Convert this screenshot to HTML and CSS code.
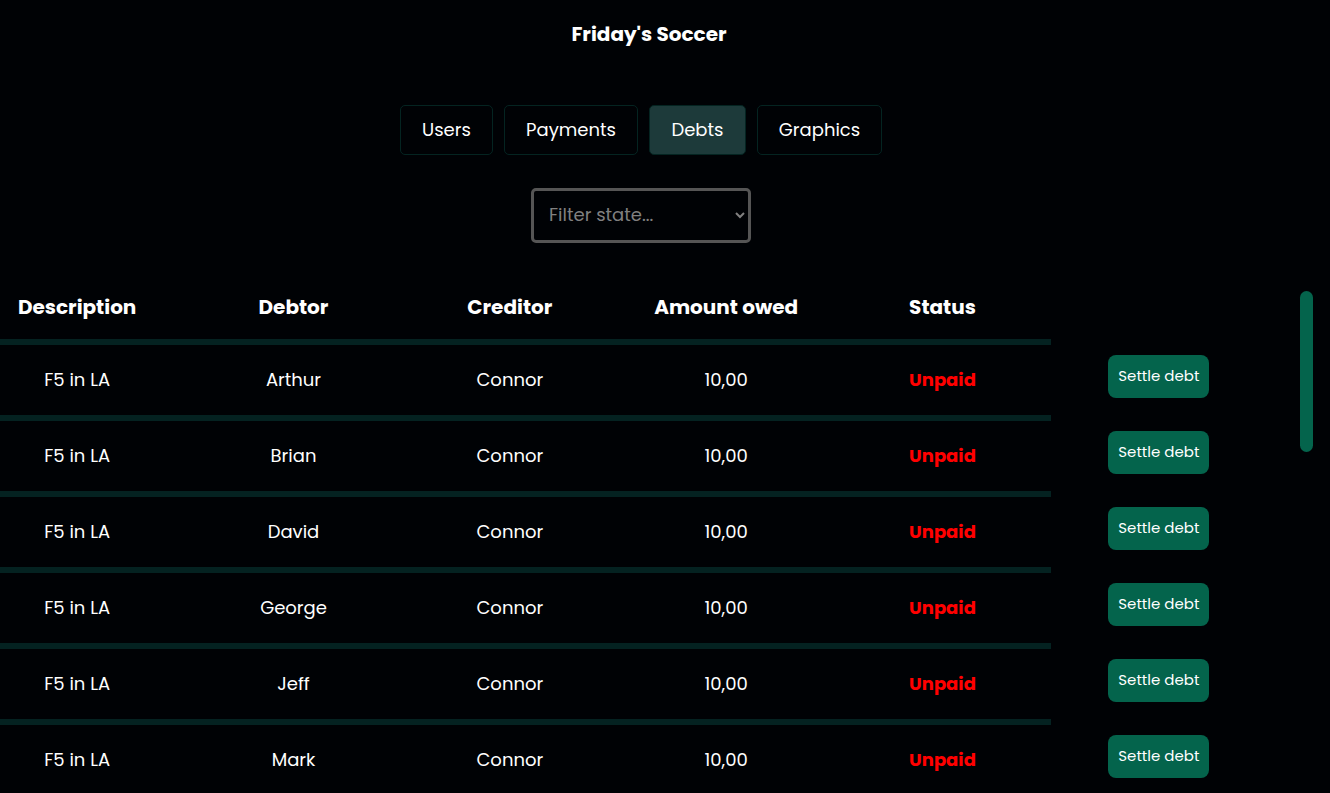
FILE: index.html
```html
<!DOCTYPE html>
<html lang="en">
<head>
<meta charset="utf-8">
<meta name="viewport" content="width=device-width, initial-scale=1">
<title>Friday's Soccer</title>
<link rel="stylesheet" href="styles.css">
</head>
<body>
<main class="page">
  <header class="header"><h1 class="title">Friday's Soccer</h1></header>
  <nav class="tabs" aria-label="Sections">
    <button class="tab" type="button">Users</button>
    <button class="tab" type="button">Payments</button>
    <button class="tab tab-active" type="button" aria-current="page">Debts</button>
    <button class="tab" type="button">Graphics</button>
  </nav>
  <div class="filter">
    <select class="filter-select" aria-label="Filter state">
      <option>Filter state...</option>
      <option>Paid</option>
      <option>Unpaid</option>
    </select>
  </div>
  <section class="debts">
    <table class="table">
      <thead>
        <tr><th>Description</th><th>Debtor</th><th>Creditor</th><th>Amount owed</th><th>Status</th><td class="action"></td></tr>
      </thead>
      <tbody>
        <tr><td>F5 in LA</td><td>Arthur</td><td>Connor</td><td>10,00</td><td class="unpaid">Unpaid</td><td class="action"><button class="settle" type="button">Settle debt</button></td></tr>
        <tr><td>F5 in LA</td><td>Brian</td><td>Connor</td><td>10,00</td><td class="unpaid">Unpaid</td><td class="action"><button class="settle" type="button">Settle debt</button></td></tr>
        <tr><td>F5 in LA</td><td>David</td><td>Connor</td><td>10,00</td><td class="unpaid">Unpaid</td><td class="action"><button class="settle" type="button">Settle debt</button></td></tr>
        <tr><td>F5 in LA</td><td>George</td><td>Connor</td><td>10,00</td><td class="unpaid">Unpaid</td><td class="action"><button class="settle" type="button">Settle debt</button></td></tr>
        <tr><td>F5 in LA</td><td>Jeff</td><td>Connor</td><td>10,00</td><td class="unpaid">Unpaid</td><td class="action"><button class="settle" type="button">Settle debt</button></td></tr>
        <tr><td>F5 in LA</td><td>Mark</td><td>Connor</td><td>10,00</td><td class="unpaid">Unpaid</td><td class="action"><button class="settle" type="button">Settle debt</button></td></tr>
      </tbody>
    </table>
    <div class="scroll-thumb"></div>
  </section>
</main>
</body>
</html>
```
FILE: styles.css
```css
* {
  box-sizing: border-box;
}

body {
  margin: 0;
  height: 100vh;
  overflow: hidden;
  background: #000205;
  color: #fff;
  font-family: Poppins, Inter, "Open Sans", sans-serif;
  font-size: 18px;
}

button,
select {
  font: inherit;
  color: inherit;
}

.header {
  padding: 19px 32px 0 0;
  text-align: center;
}

.title {
  margin: 0;
  font-size: 20px;
  line-height: 30px;
  font-weight: 700;
}

.tabs {
  display: grid;
  grid-template-columns: 93px 134px 97px 125px;
  justify-content: center;
  gap: 11px;
  margin-top: 56px;
  padding-right: 48px;
}

.tab {
  height: 50px;
  padding: 0 0 2px;
  border: 1px solid #042421;
  border-radius: 5px;
  background: transparent;
  cursor: pointer;
}

.tab-active {
  background: #1d3a3a;
}

.filter {
  display: flex;
  justify-content: center;
  margin-top: 33px;
  padding-right: 48px;
}

.filter-select {
  width: 220px;
  height: 55px;
  padding: 0 0 2px 11px;
  border: 3px solid #555;
  border-radius: 5px;
  background: #000205;
  color: #808080;
}

.debts {
  display: flex;
  align-items: flex-start;
  gap: 33px;
  margin: 26px 17px 0 -31px;
}

.table {
  flex: 1;
  width: 100%;
  table-layout: fixed;
  border-collapse: separate;
  border-spacing: 0;
  text-align: center;
}

.table th,
.table td {
  height: 76px;
  padding: 0 0 2px;
  border-bottom: 6px solid #042221;
}

.table th {
  padding: 6px 0 0;
  font-size: 20px;
  font-weight: 700;
}

.table .unpaid {
  color: #f00;
  font-weight: 700;
}

.table .action {
  padding: 10px 0 0;
  border-bottom: 0;
  vertical-align: top;
}

.settle {
  width: 101px;
  height: 43px;
  padding: 0 0 2px;
  border: 0;
  border-radius: 8px;
  background: #04644c;
  font-size: 15px;
  cursor: pointer;
}

.scroll-thumb {
  flex: none;
  width: 13px;
  height: 161px;
  margin-top: 22px;
  border-radius: 7px;
  background: #04644c;
}
```
